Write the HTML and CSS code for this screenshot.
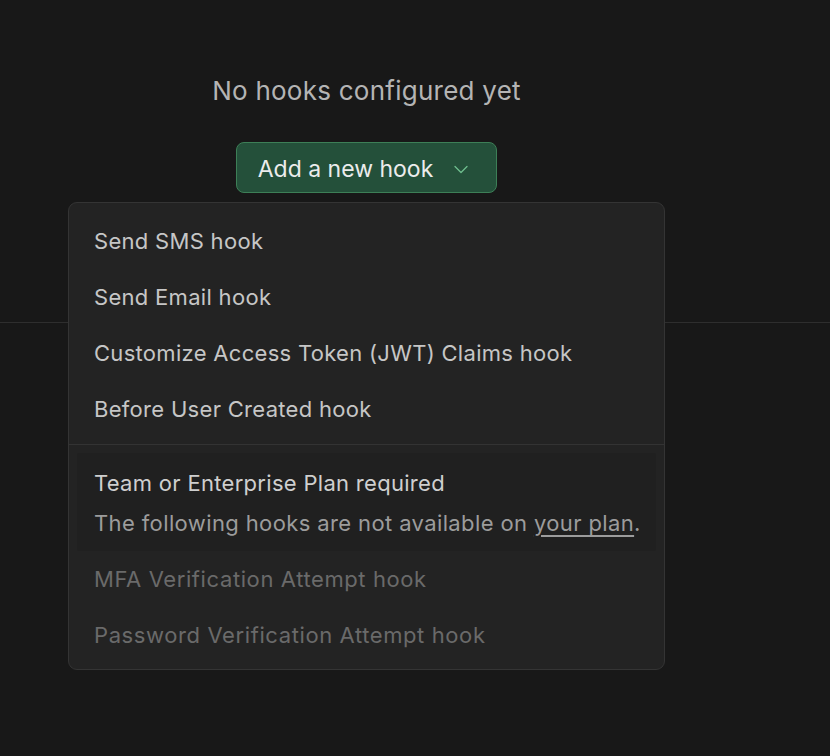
FILE: index.html
```html
<!DOCTYPE html>
<html>
<head>
<meta charset="utf-8">
<link rel="stylesheet" href="styles.css">
</head>
<body>
<div class="page">
  <section class="empty">
    <div class="content">
      <p class="empty-title">No hooks configured yet</p>
      <div class="dropdown">
        <button class="add-btn">Add a new hook
          <svg class="chev" width="16" height="16" viewBox="0 0 16 16" fill="none" stroke="currentColor" stroke-width="1.3" stroke-linecap="round" stroke-linejoin="round"><path d="M2 5.5 8 11.5l6-6"/></svg>
        </button>
        <div class="menu">
          <div class="item">Send SMS hook</div>
          <div class="item">Send Email hook</div>
          <div class="item">Customize Access Token (JWT) Claims hook</div>
          <div class="item">Before User Created hook</div>
          <div class="sep"></div>
          <div class="notice">
            <div class="notice-title">Team or Enterprise Plan required</div>
            <div class="notice-text">The following hooks are not available on <a class="plan-link" href="#">your plan</a>.</div>
          </div>
          <div class="item disabled">MFA Verification Attempt hook</div>
          <div class="item disabled">Password Verification Attempt hook</div>
        </div>
      </div>
    </div>
  </section>
</div>
</body>
</html>
```
FILE: styles.css
```css
html, body {
  margin: 0;
  padding: 0;
  background: #181818;
  height: 100%;
}
body {
  font-family: Inter, "Noto Sans", sans-serif;
  color: #bdbdbd;
}
.page {
  width: 100%;
}
.empty {
  height: 322px;
  border-bottom: 1px solid #2e2e2e;
  width: 100%;
}
.content {
  width: 733px;
  display: flex;
  flex-direction: column;
  align-items: center;
}
.empty-title {
  width: 100%;
  text-align: center;
  margin: 75px 0 0;
  font-size: 26px;
  line-height: 32px;
  color: #b4b4b4;
  letter-spacing: 0.25px;
}
.dropdown {
  position: relative;
  width: 100%;
  display: flex;
  justify-content: center;
  margin-top: 35px;
}
.add-btn {
  height: 51px;
  width: 261px;
  box-sizing: border-box;
  border-radius: 8px;
  border: 1px solid #3d7f57;
  background: #24503a;
  color: #ececec;
  font-family: inherit;
  font-size: 23px;
  display: flex;
  align-items: center;
  justify-content: center;
  gap: 20px;
  padding: 2px 6px 0 0;
}
.chev {
  color: #6fbf8e;
}
.menu {
  position: absolute;
  top: 60px;
  left: 68px;
  width: 597px;
  box-sizing: border-box;
  background: #232323;
  border: 1px solid #343434;
  border-radius: 9px;
  padding: 10px 0 6px;
}
.item {
  height: 56px;
  display: flex;
  align-items: center;
  padding: 0 25px;
  font-size: 22px;
  letter-spacing: 0.3px;
  color: #c6c6c6;
}
.item.disabled {
  color: #6a6a6a;
  letter-spacing: 0.6px;
}
.sep {
  height: 1px;
  background: #333333;
  margin: 7px 0 8px;
}
.notice {
  margin: 0 8px;
  background: #202020;
  padding: 15px 8px 13px 17px;
  border-radius: 2px;
}
.notice-title {
  font-size: 22px;
  line-height: 30px;
  letter-spacing: 0.3px;
  color: #cfcfcf;
  white-space: nowrap;
}
.notice-text {
  font-size: 22px;
  line-height: 30px;
  letter-spacing: 0.38px;
  margin-top: 10px;
  color: #9c9c9c;
  white-space: nowrap;
}
.plan-link {
  color: #9c9c9c;
  text-decoration: underline;
  text-underline-offset: 4px;
}
```
